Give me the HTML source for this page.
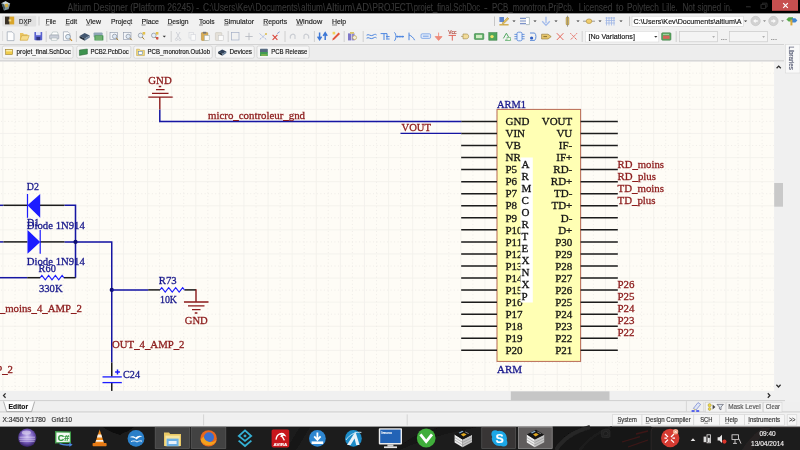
<!DOCTYPE html>
<html><head><meta charset="utf-8"><title>Altium Designer - projet_final.SchDoc</title>
<style>
html,body{margin:0;padding:0;background:#f0f0f0;}
body{width:800px;height:450px;overflow:hidden;}
svg{display:block;}
text{white-space:pre;}
</style></head><body>
<svg width="800" height="450" viewBox="0 0 800 450" font-family="'Liberation Sans', sans-serif">
<defs><filter id="soft" x="-5%" y="-5%" width="110%" height="110%"><feGaussianBlur stdDeviation="0.35"/></filter><linearGradient id="tb" x1="0" y1="0" x2="1" y2="0"><stop offset="0" stop-color="#222"/><stop offset="1" stop-color="#1a1414"/></linearGradient><radialGradient id="ecl" cx="0.5" cy="0.42" r="0.6"><stop offset="0" stop-color="#cbbdf0"/><stop offset="0.55" stop-color="#7a5fc0"/><stop offset="1" stop-color="#2a1858"/></radialGradient></defs>
<g id="sheet">
<rect x="0" y="61.7" width="774.2" height="329.2" fill="#fefcf6" />
<path d="M2.95 62V390.8 M27.05 62V390.8 M51.15 62V390.8 M75.25 62V390.8 M99.35 62V390.8 M123.45 62V390.8 M147.55 62V390.8 M171.65 62V390.8 M195.75 62V390.8 M219.85 62V390.8 M243.95 62V390.8 M268.05 62V390.8 M292.15 62V390.8 M316.25 62V390.8 M340.35 62V390.8 M364.45 62V390.8 M388.55 62V390.8 M412.65 62V390.8 M436.75 62V390.8 M460.85 62V390.8 M484.95 62V390.8 M509.05 62V390.8 M533.15 62V390.8 M557.25 62V390.8 M581.35 62V390.8 M605.45 62V390.8 M629.55 62V390.8 M653.65 62V390.8 M677.75 62V390.8 M701.85 62V390.8 M725.95 62V390.8 M750.05 62V390.8 M0 85.25H774 M0 109.35H774 M0 133.45H774 M0 157.55H774 M0 181.65H774 M0 205.75H774 M0 229.85H774 M0 253.95H774 M0 278.05H774 M0 302.15H774 M0 326.25H774 M0 350.35H774 M0 374.45H774" stroke="#f1f0eb" stroke-width="0.8" fill="none"/>
<path d="M15.0 62.5V390.8 M39.1 62.5V390.8 M63.2 62.5V390.8 M87.3 62.5V390.8 M111.4 62.5V390.8 M135.5 62.5V390.8 M159.6 62.5V390.8 M183.7 62.5V390.8 M207.8 62.5V390.8 M231.9 62.5V390.8 M256.0 62.5V390.8 M280.1 62.5V390.8 M304.2 62.5V390.8 M328.3 62.5V390.8 M352.4 62.5V390.8 M376.5 62.5V390.8 M400.6 62.5V390.8 M424.7 62.5V390.8 M448.8 62.5V390.8 M472.9 62.5V390.8 M497.0 62.5V390.8 M521.1 62.5V390.8 M545.2 62.5V390.8 M569.3 62.5V390.8 M593.4 62.5V390.8 M617.5 62.5V390.8 M641.6 62.5V390.8 M665.7 62.5V390.8 M689.8 62.5V390.8 M713.9 62.5V390.8 M738.0 62.5V390.8 M762.1 62.5V390.8 M1 73.2H774 M1 97.3H774 M1 121.4H774 M1 145.5H774 M1 169.6H774 M1 193.7H774 M1 217.8H774 M1 241.9H774 M1 266.0H774 M1 290.1H774 M1 314.2H774 M1 338.3H774 M1 362.4H774 M1 386.5H774" stroke="#ebe9e4" stroke-width="0.8" stroke-dasharray="1 2.51" fill="none"/>
</g>
<g id="schematic" font-family="'Liberation Serif', serif" filter="url(#soft)">
<rect x="497.0" y="109.4" width="83.60000000000002" height="252.0" fill="#ffffb4" stroke="#b86a55" stroke-width="1.0" />
<line x1="461.2" y1="121.4" x2="497.0" y2="121.4" stroke="#1a1a1a" stroke-width="1.5" />
<line x1="580.6" y1="121.4" x2="617.8" y2="121.4" stroke="#1a1a1a" stroke-width="1.5" />
<text x="505.5" y="125.1" font-size="11" fill="#141414" stroke="#141414" stroke-width="0.3">GND</text>
<text x="572.3" y="125.1" font-size="11" fill="#141414" text-anchor="end" stroke="#141414" stroke-width="0.3">VOUT</text>
<line x1="461.2" y1="133.45" x2="497.0" y2="133.45" stroke="#1a1a1a" stroke-width="1.5" />
<line x1="580.6" y1="133.45" x2="617.8" y2="133.45" stroke="#1a1a1a" stroke-width="1.5" />
<text x="505.5" y="137.15" font-size="11" fill="#141414" stroke="#141414" stroke-width="0.3">VIN</text>
<text x="572.3" y="137.15" font-size="11" fill="#141414" text-anchor="end" stroke="#141414" stroke-width="0.3">VU</text>
<line x1="461.2" y1="145.5" x2="497.0" y2="145.5" stroke="#1a1a1a" stroke-width="1.5" />
<line x1="580.6" y1="145.5" x2="617.8" y2="145.5" stroke="#1a1a1a" stroke-width="1.5" />
<text x="505.5" y="149.2" font-size="11" fill="#141414" stroke="#141414" stroke-width="0.3">VB</text>
<text x="572.3" y="149.2" font-size="11" fill="#141414" text-anchor="end" stroke="#141414" stroke-width="0.3">IF-</text>
<line x1="461.2" y1="157.55" x2="497.0" y2="157.55" stroke="#1a1a1a" stroke-width="1.5" />
<line x1="580.6" y1="157.55" x2="617.8" y2="157.55" stroke="#1a1a1a" stroke-width="1.5" />
<text x="505.5" y="161.25" font-size="11" fill="#141414" stroke="#141414" stroke-width="0.3">NR</text>
<text x="572.3" y="161.25" font-size="11" fill="#141414" text-anchor="end" stroke="#141414" stroke-width="0.3">IF+</text>
<line x1="461.2" y1="169.6" x2="497.0" y2="169.6" stroke="#1a1a1a" stroke-width="1.5" />
<line x1="580.6" y1="169.6" x2="617.8" y2="169.6" stroke="#1a1a1a" stroke-width="1.5" />
<text x="505.5" y="173.3" font-size="11" fill="#141414" stroke="#141414" stroke-width="0.3">P5</text>
<text x="572.3" y="173.3" font-size="11" fill="#141414" text-anchor="end" stroke="#141414" stroke-width="0.3">RD-</text>
<line x1="461.2" y1="181.65" x2="497.0" y2="181.65" stroke="#1a1a1a" stroke-width="1.5" />
<line x1="580.6" y1="181.65" x2="617.8" y2="181.65" stroke="#1a1a1a" stroke-width="1.5" />
<text x="505.5" y="185.35" font-size="11" fill="#141414" stroke="#141414" stroke-width="0.3">P6</text>
<text x="572.3" y="185.35" font-size="11" fill="#141414" text-anchor="end" stroke="#141414" stroke-width="0.3">RD+</text>
<line x1="461.2" y1="193.7" x2="497.0" y2="193.7" stroke="#1a1a1a" stroke-width="1.5" />
<line x1="580.6" y1="193.7" x2="617.8" y2="193.7" stroke="#1a1a1a" stroke-width="1.5" />
<text x="505.5" y="197.4" font-size="11" fill="#141414" stroke="#141414" stroke-width="0.3">P7</text>
<text x="572.3" y="197.4" font-size="11" fill="#141414" text-anchor="end" stroke="#141414" stroke-width="0.3">TD-</text>
<line x1="461.2" y1="205.75" x2="497.0" y2="205.75" stroke="#1a1a1a" stroke-width="1.5" />
<line x1="580.6" y1="205.75" x2="617.8" y2="205.75" stroke="#1a1a1a" stroke-width="1.5" />
<text x="505.5" y="209.45" font-size="11" fill="#141414" stroke="#141414" stroke-width="0.3">P8</text>
<text x="572.3" y="209.45" font-size="11" fill="#141414" text-anchor="end" stroke="#141414" stroke-width="0.3">TD+</text>
<line x1="461.2" y1="217.8" x2="497.0" y2="217.8" stroke="#1a1a1a" stroke-width="1.5" />
<line x1="580.6" y1="217.8" x2="617.8" y2="217.8" stroke="#1a1a1a" stroke-width="1.5" />
<text x="505.5" y="221.5" font-size="11" fill="#141414" stroke="#141414" stroke-width="0.3">P9</text>
<text x="572.3" y="221.5" font-size="11" fill="#141414" text-anchor="end" stroke="#141414" stroke-width="0.3">D-</text>
<line x1="461.2" y1="229.85" x2="497.0" y2="229.85" stroke="#1a1a1a" stroke-width="1.5" />
<line x1="580.6" y1="229.85" x2="617.8" y2="229.85" stroke="#1a1a1a" stroke-width="1.5" />
<text x="505.5" y="233.55" font-size="11" fill="#141414" stroke="#141414" stroke-width="0.3">P10</text>
<text x="572.3" y="233.55" font-size="11" fill="#141414" text-anchor="end" stroke="#141414" stroke-width="0.3">D+</text>
<line x1="461.2" y1="241.9" x2="497.0" y2="241.9" stroke="#1a1a1a" stroke-width="1.5" />
<line x1="580.6" y1="241.9" x2="617.8" y2="241.9" stroke="#1a1a1a" stroke-width="1.5" />
<text x="505.5" y="245.6" font-size="11" fill="#141414" stroke="#141414" stroke-width="0.3">P11</text>
<text x="572.3" y="245.6" font-size="11" fill="#141414" text-anchor="end" stroke="#141414" stroke-width="0.3">P30</text>
<line x1="461.2" y1="253.95" x2="497.0" y2="253.95" stroke="#1a1a1a" stroke-width="1.5" />
<line x1="580.6" y1="253.95" x2="617.8" y2="253.95" stroke="#1a1a1a" stroke-width="1.5" />
<text x="505.5" y="257.65" font-size="11" fill="#141414" stroke="#141414" stroke-width="0.3">P12</text>
<text x="572.3" y="257.65" font-size="11" fill="#141414" text-anchor="end" stroke="#141414" stroke-width="0.3">P29</text>
<line x1="461.2" y1="266.0" x2="497.0" y2="266.0" stroke="#1a1a1a" stroke-width="1.5" />
<line x1="580.6" y1="266.0" x2="617.8" y2="266.0" stroke="#1a1a1a" stroke-width="1.5" />
<text x="505.5" y="269.7" font-size="11" fill="#141414" stroke="#141414" stroke-width="0.3">P13</text>
<text x="572.3" y="269.7" font-size="11" fill="#141414" text-anchor="end" stroke="#141414" stroke-width="0.3">P28</text>
<line x1="461.2" y1="278.05" x2="497.0" y2="278.05" stroke="#1a1a1a" stroke-width="1.5" />
<line x1="580.6" y1="278.05" x2="617.8" y2="278.05" stroke="#1a1a1a" stroke-width="1.5" />
<text x="505.5" y="281.75" font-size="11" fill="#141414" stroke="#141414" stroke-width="0.3">P14</text>
<text x="572.3" y="281.75" font-size="11" fill="#141414" text-anchor="end" stroke="#141414" stroke-width="0.3">P27</text>
<line x1="461.2" y1="290.1" x2="497.0" y2="290.1" stroke="#1a1a1a" stroke-width="1.5" />
<line x1="580.6" y1="290.1" x2="617.8" y2="290.1" stroke="#1a1a1a" stroke-width="1.5" />
<text x="505.5" y="293.8" font-size="11" fill="#141414" stroke="#141414" stroke-width="0.3">P15</text>
<text x="572.3" y="293.8" font-size="11" fill="#141414" text-anchor="end" stroke="#141414" stroke-width="0.3">P26</text>
<line x1="461.2" y1="302.15" x2="497.0" y2="302.15" stroke="#1a1a1a" stroke-width="1.5" />
<line x1="580.6" y1="302.15" x2="617.8" y2="302.15" stroke="#1a1a1a" stroke-width="1.5" />
<text x="505.5" y="305.85" font-size="11" fill="#141414" stroke="#141414" stroke-width="0.3">P16</text>
<text x="572.3" y="305.85" font-size="11" fill="#141414" text-anchor="end" stroke="#141414" stroke-width="0.3">P25</text>
<line x1="461.2" y1="314.2" x2="497.0" y2="314.2" stroke="#1a1a1a" stroke-width="1.5" />
<line x1="580.6" y1="314.2" x2="617.8" y2="314.2" stroke="#1a1a1a" stroke-width="1.5" />
<text x="505.5" y="317.9" font-size="11" fill="#141414" stroke="#141414" stroke-width="0.3">P17</text>
<text x="572.3" y="317.9" font-size="11" fill="#141414" text-anchor="end" stroke="#141414" stroke-width="0.3">P24</text>
<line x1="461.2" y1="326.25" x2="497.0" y2="326.25" stroke="#1a1a1a" stroke-width="1.5" />
<line x1="580.6" y1="326.25" x2="617.8" y2="326.25" stroke="#1a1a1a" stroke-width="1.5" />
<text x="505.5" y="329.95" font-size="11" fill="#141414" stroke="#141414" stroke-width="0.3">P18</text>
<text x="572.3" y="329.95" font-size="11" fill="#141414" text-anchor="end" stroke="#141414" stroke-width="0.3">P23</text>
<line x1="461.2" y1="338.3" x2="497.0" y2="338.3" stroke="#1a1a1a" stroke-width="1.5" />
<line x1="580.6" y1="338.3" x2="617.8" y2="338.3" stroke="#1a1a1a" stroke-width="1.5" />
<text x="505.5" y="342.0" font-size="11" fill="#141414" stroke="#141414" stroke-width="0.3">P19</text>
<text x="572.3" y="342.0" font-size="11" fill="#141414" text-anchor="end" stroke="#141414" stroke-width="0.3">P22</text>
<line x1="461.2" y1="350.35" x2="497.0" y2="350.35" stroke="#1a1a1a" stroke-width="1.5" />
<line x1="580.6" y1="350.35" x2="617.8" y2="350.35" stroke="#1a1a1a" stroke-width="1.5" />
<text x="505.5" y="354.05" font-size="11" fill="#141414" stroke="#141414" stroke-width="0.3">P20</text>
<text x="572.3" y="354.05" font-size="11" fill="#141414" text-anchor="end" stroke="#141414" stroke-width="0.3">P21</text>
<rect x="520.5" y="157.5" width="12.3" height="145" fill="#ffffff" />
<text x="521.5" y="168.2" font-size="11" fill="#141414" stroke="#141414" stroke-width="0.3">A</text>
<text x="521.5" y="180.2" font-size="11" fill="#141414" stroke="#141414" stroke-width="0.3">R</text>
<text x="521.5" y="192.2" font-size="11" fill="#141414" stroke="#141414" stroke-width="0.3">M</text>
<text x="521.5" y="204.2" font-size="11" fill="#141414" stroke="#141414" stroke-width="0.3">C</text>
<text x="521.5" y="216.2" font-size="11" fill="#141414" stroke="#141414" stroke-width="0.3">O</text>
<text x="521.5" y="228.2" font-size="11" fill="#141414" stroke="#141414" stroke-width="0.3">R</text>
<text x="521.5" y="240.2" font-size="11" fill="#141414" stroke="#141414" stroke-width="0.3">T</text>
<text x="521.5" y="252.2" font-size="11" fill="#141414" stroke="#141414" stroke-width="0.3">E</text>
<text x="521.5" y="264.2" font-size="11" fill="#141414" stroke="#141414" stroke-width="0.3">X</text>
<text x="521.5" y="276.2" font-size="11" fill="#141414" stroke="#141414" stroke-width="0.3">N</text>
<text x="521.5" y="288.2" font-size="11" fill="#141414" stroke="#141414" stroke-width="0.3">X</text>
<text x="521.5" y="300.2" font-size="11" fill="#141414" stroke="#141414" stroke-width="0.3">P</text>
<text x="497" y="107.5" font-size="11" fill="#1a1a8c" textLength="29" lengthAdjust="spacingAndGlyphs" stroke="#1a1a8c" stroke-width="0.3">ARM1</text>
<text x="497" y="372.5" font-size="11" fill="#1a1a8c" textLength="25" lengthAdjust="spacingAndGlyphs" stroke="#1a1a8c" stroke-width="0.3">ARM</text>
<text x="617.5" y="167.6" font-size="11" fill="#8c1c1c" textLength="46.5" lengthAdjust="spacingAndGlyphs" stroke="#8c1c1c" stroke-width="0.3">RD_moins</text>
<text x="617.5" y="179.65" font-size="11" fill="#8c1c1c" textLength="38.5" lengthAdjust="spacingAndGlyphs" stroke="#8c1c1c" stroke-width="0.3">RD_plus</text>
<text x="617.5" y="191.7" font-size="11" fill="#8c1c1c" textLength="46.5" lengthAdjust="spacingAndGlyphs" stroke="#8c1c1c" stroke-width="0.3">TD_moins</text>
<text x="617.5" y="203.75" font-size="11" fill="#8c1c1c" textLength="38" lengthAdjust="spacingAndGlyphs" stroke="#8c1c1c" stroke-width="0.3">TD_plus</text>
<text x="617.5" y="288.1" font-size="11" fill="#8c1c1c" textLength="17" lengthAdjust="spacingAndGlyphs" stroke="#8c1c1c" stroke-width="0.3">P26</text>
<text x="617.5" y="300.15" font-size="11" fill="#8c1c1c" textLength="17" lengthAdjust="spacingAndGlyphs" stroke="#8c1c1c" stroke-width="0.3">P25</text>
<text x="617.5" y="312.2" font-size="11" fill="#8c1c1c" textLength="17" lengthAdjust="spacingAndGlyphs" stroke="#8c1c1c" stroke-width="0.3">P24</text>
<text x="617.5" y="324.25" font-size="11" fill="#8c1c1c" textLength="17" lengthAdjust="spacingAndGlyphs" stroke="#8c1c1c" stroke-width="0.3">P23</text>
<text x="617.5" y="336.3" font-size="11" fill="#8c1c1c" textLength="17" lengthAdjust="spacingAndGlyphs" stroke="#8c1c1c" stroke-width="0.3">P22</text>
<path d="M159.8 109.5V121.4H461.2" stroke="#1616a2" stroke-width="1.5" fill="none"/>
<line x1="400.5" y1="133.45" x2="461.2" y2="133.45" stroke="#1616a2" stroke-width="1.3" />
<text x="401.5" y="131.3" font-size="11" fill="#8c1c1c" textLength="29.5" lengthAdjust="spacingAndGlyphs" stroke="#8c1c1c" stroke-width="0.3">VOUT</text>
<text x="208" y="119.0" font-size="11" fill="#8c1c1c" textLength="97" lengthAdjust="spacingAndGlyphs" stroke="#8c1c1c" stroke-width="0.3">micro_controleur_gnd</text>
<path d="M159.8 109.5V97.1 M148.3 97.1H172.7 M152 93.4H168.5 M156 89.6H164.6 M158.8 86.5H161.2" stroke="#8c1c1c" stroke-width="1.4" fill="none"/>
<text x="148.3" y="83.8" font-size="11" fill="#8c1c1c" textLength="23.4" lengthAdjust="spacingAndGlyphs" stroke="#8c1c1c" stroke-width="0.3">GND</text>
<line x1="0" y1="205.3" x2="3.4" y2="205.3" stroke="#1616a2" stroke-width="1.5" />
<line x1="3.4" y1="205.3" x2="27.5" y2="205.3" stroke="#1a1a1a" stroke-width="1.5" />
<line x1="40" y1="205.3" x2="64.6" y2="205.3" stroke="#1a1a1a" stroke-width="1.5" />
<path d="M64.6 205.3H75.5V277.7" stroke="#1616a2" stroke-width="1.5" fill="none"/>
<path d="M27.5 205.3L40.2 194V217.8Z" fill="#1a1aff"/>
<line x1="27.5" y1="194" x2="27.5" y2="217.8" stroke="#1a1aff" stroke-width="1.2" />
<line x1="0" y1="241.9" x2="3.4" y2="241.9" stroke="#1616a2" stroke-width="1.5" />
<line x1="3.4" y1="241.9" x2="27.5" y2="241.9" stroke="#1a1a1a" stroke-width="1.5" />
<line x1="40" y1="241.9" x2="64.6" y2="241.9" stroke="#1a1a1a" stroke-width="1.5" />
<path d="M64.6 241.9H111.75V362.5" stroke="#1616a2" stroke-width="1.5" fill="none"/>
<path d="M40.2 241.9L27.5 230V253.8Z" fill="#1a1aff"/>
<line x1="40.2" y1="230" x2="40.2" y2="253.8" stroke="#1a1aff" stroke-width="1.2" />
<circle cx="75.5" cy="241.9" r="2.1" fill="#101070"/>
<text x="26.8" y="190.1" font-size="11" fill="#1a1a8c" textLength="12.2" lengthAdjust="spacingAndGlyphs" stroke="#1a1a8c" stroke-width="0.3">D2</text>
<text x="27" y="226.4" font-size="11" fill="#1a1a8c" textLength="12.2" lengthAdjust="spacingAndGlyphs" stroke="#1a1a8c" stroke-width="0.3">D1</text>
<text x="26.8" y="228.5" font-size="11" fill="#1a1a8c" textLength="58" lengthAdjust="spacingAndGlyphs" stroke="#1a1a8c" stroke-width="0.3">Diode 1N914</text>
<text x="26.8" y="264.8" font-size="11" fill="#1a1a8c" textLength="58" lengthAdjust="spacingAndGlyphs" stroke="#1a1a8c" stroke-width="0.3">Diode 1N914</text>
<line x1="0" y1="277.7" x2="27.2" y2="277.7" stroke="#1616a2" stroke-width="1.5" />
<line x1="27.2" y1="277.7" x2="40.2" y2="277.7" stroke="#1a1a1a" stroke-width="1.5" />
<line x1="63.8" y1="277.7" x2="75.5" y2="277.7" stroke="#1a1a1a" stroke-width="1.5" />
<path d="M40.2 277.7 L41.89 275.5 L45.26 279.9 L48.63 275.5 L52.0 279.9 L55.37 275.5 L58.74 279.9 L62.11 275.5 L63.8 277.7" stroke="#1a1aff" stroke-width="1.1" fill="none"/>
<text x="38.6" y="272.1" font-size="11" fill="#1a1a8c" textLength="17.2" lengthAdjust="spacingAndGlyphs" stroke="#1a1a8c" stroke-width="0.3">R60</text>
<text x="38.9" y="291.8" font-size="11" fill="#1a1a8c" textLength="23.7" lengthAdjust="spacingAndGlyphs" stroke="#1a1a8c" stroke-width="0.3">330K</text>
<text x="-0.2" y="312" font-size="11" fill="#8c1c1c" textLength="82.1" lengthAdjust="spacingAndGlyphs" stroke="#8c1c1c" stroke-width="0.3">_moins_4_AMP_2</text>
<text x="-13.4" y="372.5" font-size="11" fill="#8c1c1c" textLength="26.4" lengthAdjust="spacingAndGlyphs" stroke="#8c1c1c" stroke-width="0.3">MP_2</text>
<circle cx="111.75" cy="289.9" r="2.1" fill="#101070"/>
<line x1="111.75" y1="289.9" x2="148.2" y2="289.9" stroke="#1616a2" stroke-width="1.5" />
<line x1="148.2" y1="289.9" x2="160" y2="289.9" stroke="#1a1a1a" stroke-width="1.5" />
<line x1="184.4" y1="289.9" x2="196" y2="289.9" stroke="#1a1a1a" stroke-width="1.5" />
<path d="M160 289.9 L161.74 287.7 L165.23 292.1 L168.71 287.7 L172.2 292.1 L175.69 287.7 L179.17 292.1 L182.66 287.7 L184.4 289.9" stroke="#1a1aff" stroke-width="1.1" fill="none"/>
<path d="M196 289.29999999999995V302 M184 302H208.5 M188 305.9H204.5 M192 309.6H200.5 M194.8 313H197.4" stroke="#8c1c1c" stroke-width="1.4" fill="none"/>
<text x="158.8" y="284.1" font-size="11" fill="#1a1a8c" textLength="17.8" lengthAdjust="spacingAndGlyphs" stroke="#1a1a8c" stroke-width="0.3">R73</text>
<text x="160" y="303.3" font-size="11" fill="#1a1a8c" textLength="17" lengthAdjust="spacingAndGlyphs" stroke="#1a1a8c" stroke-width="0.3">10K</text>
<text x="184.8" y="323.8" font-size="11" fill="#8c1c1c" textLength="23" lengthAdjust="spacingAndGlyphs" stroke="#8c1c1c" stroke-width="0.3">GND</text>
<text x="112" y="348.3" font-size="11" fill="#8c1c1c" textLength="72.5" lengthAdjust="spacingAndGlyphs" stroke="#8c1c1c" stroke-width="0.3">OUT_4_AMP_2</text>
<line x1="111.75" y1="362.5" x2="111.75" y2="376.6" stroke="#1a1a1a" stroke-width="1.5" />
<line x1="111.75" y1="382.6" x2="111.75" y2="391.5" stroke="#1a1a1a" stroke-width="1.5" />
<line x1="102.5" y1="376.9" x2="121.8" y2="376.9" stroke="#1a1aff" stroke-width="1.3" />
<line x1="102.5" y1="382.6" x2="121.8" y2="382.6" stroke="#1a1aff" stroke-width="1.3" />
<path d="M115.1 372H119.9 M117.5 369.6V374.4" stroke="#1a1aff" stroke-width="1.4" fill="none"/>
<text x="123" y="378" font-size="11" fill="#1a1a8c" textLength="17" lengthAdjust="spacingAndGlyphs" stroke="#1a1a8c" stroke-width="0.3">C24</text>
</g>
<g id="scrollbars">
<rect x="774.2" y="61.7" width="25.8" height="340" fill="#f0f0f0" />
<rect x="774.2" y="183" width="8.8" height="23.7" fill="#c9c9c9" />
<rect x="0" y="390.9" width="785" height="9.6" fill="#f0f0f0" />
<rect x="510.8" y="391.4" width="98.7" height="9" fill="#c6c6c6" />
<path d="M776.6 68.3L778.7 66.1L780.8 68.3 M776.4 384.8L778.5 387L780.6 384.8 M5.6 393.4L3.5 395.6L5.6 397.8 M767.8 393.3L769.9 395.5L767.8 397.7" stroke="#2e2e2e" stroke-width="1.25" fill="none"/>
</g>
<g id="chrome-top" filter="url(#soft)">
<rect x="0" y="0" width="800" height="13.6" fill="#000" />
<rect x="0" y="13.6" width="800" height="1.2" fill="#fafafa" />
<rect x="0" y="14.8" width="800" height="14.6" fill="#f1f1f1" />
<rect x="0" y="29.4" width="800" height="15" fill="#f1f1f1" />
<rect x="0" y="44" width="784" height="0.9" fill="#c9c9c9" />
<rect x="0" y="44.9" width="784" height="0.8" fill="#fbfbfb" />
<rect x="0" y="45.2" width="800" height="15.2" fill="#ededed" />
<rect x="0" y="60.4" width="784" height="0.9" fill="#c9c9c9" />
<text x="67.5" y="10.7" font-size="11.8" fill="#373737" textLength="131.5" lengthAdjust="spacingAndGlyphs" stroke="#373737" stroke-width="0.15">Altium Designer (Platform 26245) -</text>
<text x="203" y="10.7" font-size="11.8" fill="#373737" textLength="51.5" lengthAdjust="spacingAndGlyphs" stroke="#373737" stroke-width="0.15">C:\Users\Kev\</text>
<text x="255.5" y="10.7" font-size="11.8" fill="#373737" textLength="44.5" lengthAdjust="spacingAndGlyphs" stroke="#373737" stroke-width="0.15">Documents\</text>
<text x="301" y="10.7" font-size="11.8" fill="#373737" textLength="24.2" lengthAdjust="spacingAndGlyphs" stroke="#373737" stroke-width="0.15">altium\</text>
<text x="326" y="10.7" font-size="11.8" fill="#373737" textLength="29" lengthAdjust="spacingAndGlyphs" stroke="#373737" stroke-width="0.15">Altium\</text>
<text x="356" y="10.7" font-size="11.8" fill="#373737" textLength="15.8" lengthAdjust="spacingAndGlyphs" stroke="#373737" stroke-width="0.15">AD\</text>
<text x="372.5" y="10.7" font-size="11.8" fill="#373737" textLength="40.6" lengthAdjust="spacingAndGlyphs" stroke="#373737" stroke-width="0.15">PROJECT\</text>
<text x="413.75" y="10.7" font-size="11.8" fill="#373737" textLength="66.3" lengthAdjust="spacingAndGlyphs" stroke="#373737" stroke-width="0.15">projet_final.SchDoc</text>
<text x="484" y="10.7" font-size="11.8" fill="#373737" textLength="3.6" lengthAdjust="spacingAndGlyphs" stroke="#373737" stroke-width="0.15">-</text>
<text x="492" y="10.7" font-size="11.8" fill="#373737" textLength="81.8" lengthAdjust="spacingAndGlyphs" stroke="#373737" stroke-width="0.15">PCB_monotron.PrjPcb.</text>
<text x="578.75" y="10.7" font-size="11.8" fill="#373737" textLength="33.6" lengthAdjust="spacingAndGlyphs" stroke="#373737" stroke-width="0.15">Licensed</text>
<text x="616" y="10.7" font-size="11.8" fill="#373737" textLength="7.6" lengthAdjust="spacingAndGlyphs" stroke="#373737" stroke-width="0.15">to</text>
<text x="627" y="10.7" font-size="11.8" fill="#373737" textLength="31.8" lengthAdjust="spacingAndGlyphs" stroke="#373737" stroke-width="0.15">Polytech</text>
<text x="662" y="10.7" font-size="11.8" fill="#373737" textLength="15.5" lengthAdjust="spacingAndGlyphs" stroke="#373737" stroke-width="0.15">Lille.</text>
<text x="682.5" y="10.7" font-size="11.8" fill="#373737" textLength="12.6" lengthAdjust="spacingAndGlyphs" stroke="#373737" stroke-width="0.15">Not</text>
<text x="697.5" y="10.7" font-size="11.8" fill="#373737" textLength="23.6" lengthAdjust="spacingAndGlyphs" stroke="#373737" stroke-width="0.15">signed</text>
<text x="724" y="10.7" font-size="11.8" fill="#373737" textLength="8" lengthAdjust="spacingAndGlyphs" stroke="#373737" stroke-width="0.15">in.</text>
<path d="M1.5 3.2L5.6 1.2L10.2 3.8L8.6 9.2L4 10.6Z" fill="#7f979f"/><path d="M1.5 3.2L5.6 1.2L10.2 3.8L6.2 5.2Z" fill="#c9d6da"/><path d="M4.6 4.2L7.6 3.6L8.4 6.4L5.6 7.4Z" fill="#d2ad3c"/><path d="M1.5 3.2L4 10.6L5 7.8L3.6 4Z" fill="#3f565e"/>
<line x1="746" y1="6.8" x2="750.6" y2="6.8" stroke="#2e2e2e" stroke-width="1.1" />
<path d="M761 4.6H765.6V8.4H761Z M762.4 4.6V3.2H767V7H765.6" stroke="#2c2c2c" stroke-width="0.9" fill="none"/>
<rect x="772" y="0" width="26" height="10.8" fill="#c75050" />
<path d="M783.2 3.2L787.8 7.8 M787.8 3.2L783.2 7.8" stroke="#fff" stroke-width="1.2" fill="none"/>
<rect x="785.6" y="44.4" width="14.4" height="28.6" fill="#f9f9f9" stroke="#d9d9d9" stroke-width="0.6" />
<text x="0" y="0" font-size="6.6" fill="#5b6078" textLength="23.7" lengthAdjust="spacingAndGlyphs" transform="translate(789.2 46.2) rotate(90)" stroke="#5b6078" stroke-width="0.15">Libraries</text>
<rect x="2.2" y="15.8" width="34" height="10.6" fill="#e2e2e2" rx="1" />
<rect x="5" y="16.6" width="4.6" height="7.8" fill="#3a3328" />
<rect x="9.6" y="16.6" width="4.6" height="7.8" fill="#d9a52b" />
<rect x="8.6" y="19.4" width="2.6" height="2" fill="#f1d98a" />
<text x="19" y="23.7" font-size="7.6" fill="#1c1c1c" textLength="12.5" lengthAdjust="spacingAndGlyphs" stroke="#1c1c1c" stroke-width="0.15">DXP</text>
<text x="45.7" y="23.7" font-size="7.6" fill="#1c1c1c" textLength="10.4" lengthAdjust="spacingAndGlyphs" stroke="#1c1c1c" stroke-width="0.15">File</text>
<text x="65.5" y="23.7" font-size="7.6" fill="#1c1c1c" textLength="11.5" lengthAdjust="spacingAndGlyphs" stroke="#1c1c1c" stroke-width="0.15">Edit</text>
<text x="86" y="23.7" font-size="7.6" fill="#1c1c1c" textLength="15" lengthAdjust="spacingAndGlyphs" stroke="#1c1c1c" stroke-width="0.15">View</text>
<text x="111" y="23.7" font-size="7.6" fill="#1c1c1c" textLength="21.2" lengthAdjust="spacingAndGlyphs" stroke="#1c1c1c" stroke-width="0.15">Project</text>
<text x="141.5" y="23.7" font-size="7.6" fill="#1c1c1c" textLength="17.5" lengthAdjust="spacingAndGlyphs" stroke="#1c1c1c" stroke-width="0.15">Place</text>
<text x="167.5" y="23.7" font-size="7.6" fill="#1c1c1c" textLength="21" lengthAdjust="spacingAndGlyphs" stroke="#1c1c1c" stroke-width="0.15">Design</text>
<text x="199" y="23.7" font-size="7.6" fill="#1c1c1c" textLength="15.5" lengthAdjust="spacingAndGlyphs" stroke="#1c1c1c" stroke-width="0.15">Tools</text>
<text x="224" y="23.7" font-size="7.6" fill="#1c1c1c" textLength="30" lengthAdjust="spacingAndGlyphs" stroke="#1c1c1c" stroke-width="0.15">Simulator</text>
<text x="263.2" y="23.7" font-size="7.6" fill="#1c1c1c" textLength="24" lengthAdjust="spacingAndGlyphs" stroke="#1c1c1c" stroke-width="0.15">Reports</text>
<text x="296.2" y="23.7" font-size="7.6" fill="#1c1c1c" textLength="26" lengthAdjust="spacingAndGlyphs" stroke="#1c1c1c" stroke-width="0.15">Window</text>
<text x="332" y="23.7" font-size="7.6" fill="#1c1c1c" textLength="14.2" lengthAdjust="spacingAndGlyphs" stroke="#1c1c1c" stroke-width="0.15">Help</text>
<line x1="24.5" y1="25.0" x2="27.5" y2="25.0" stroke="#333" stroke-width="0.6" />
<line x1="45.7" y1="25.0" x2="49.4" y2="25.0" stroke="#333" stroke-width="0.6" />
<line x1="65.5" y1="25.0" x2="69.6" y2="25.0" stroke="#333" stroke-width="0.6" />
<line x1="86" y1="25.0" x2="90.4" y2="25.0" stroke="#333" stroke-width="0.6" />
<line x1="129" y1="25.0" x2="130.6" y2="25.0" stroke="#333" stroke-width="0.6" />
<line x1="141.5" y1="25.0" x2="145.6" y2="25.0" stroke="#333" stroke-width="0.6" />
<line x1="167.5" y1="25.0" x2="172.6" y2="25.0" stroke="#333" stroke-width="0.6" />
<line x1="199" y1="25.0" x2="203" y2="25.0" stroke="#333" stroke-width="0.6" />
<line x1="224" y1="25.0" x2="228.6" y2="25.0" stroke="#333" stroke-width="0.6" />
<line x1="263.2" y1="25.0" x2="268.2" y2="25.0" stroke="#333" stroke-width="0.6" />
<line x1="296.2" y1="25.0" x2="302.8" y2="25.0" stroke="#333" stroke-width="0.6" />
<line x1="332" y1="25.0" x2="337" y2="25.0" stroke="#333" stroke-width="0.6" />
<line x1="39" y1="16.5" x2="39" y2="25.5" stroke="#c4c4c4" stroke-width="0.8" />
<line x1="494.5" y1="16.5" x2="494.5" y2="26" stroke="#bdbdbd" stroke-width="0.8" />
<rect x="499.4" y="17" width="4.6" height="5" fill="#5f86cf"/><path d="M499.4 24.8H508.6" stroke="#cfa53a" stroke-width="1.3"/><path d="M502 23.2L507.4 17.4L508.8 18.8L503.4 24Z" fill="#e8c45a" stroke="#8a6b22" stroke-width="0.4"/>
<path d="M512.4 20.4H515.6L514 22.099999999999998Z" fill="#333"/>
<path d="M520 18.4H527.5 M520 21H529 M520 23.6H527.5" stroke="#7d94c9" stroke-width="1.2"/><path d="M526 17.4H529.4V24.6H526" stroke="#9aa" stroke-width="0.7" fill="#fff"/>
<path d="M533.4 20.4H536.6L535 22.099999999999998Z" fill="#333"/>
<path d="M546 16.8V23 M542.2 21.2L546 25.2L549.8 21.2" stroke="#a3bbeb" stroke-width="1.3" fill="none"/>
<path d="M554.4 20.4H557.6L556 22.099999999999998Z" fill="#333"/>
<rect x="566.2" y="17" width="2.6" height="8" rx="1" fill="#e8c765" stroke="#9b7a2b" stroke-width="0.6"/><path d="M567.5 15.6V26.8" stroke="#777" stroke-width="0.6"/>
<path d="M576.4 20.4H579.6L578 22.099999999999998Z" fill="#333"/>
<path d="M583 21.2H595" stroke="#777" stroke-width="0.7"/><ellipse cx="589" cy="21.2" rx="2.8" ry="2.3" fill="#f2cf6e" stroke="#a88a3a" stroke-width="0.6"/>
<path d="M598.4 20.4H601.6L600 22.099999999999998Z" fill="#333"/>
<path d="M606.5 17V25.5 M609 17V25.5 M611.5 17V25.5 M614 17V25.5 M605.5 18H615 M605.5 20.5H615 M605.5 23H615" stroke="#9fb6e6" stroke-width="0.8"/>
<path d="M619.4 20.4H622.6L621 22.099999999999998Z" fill="#333"/>
<line x1="629.5" y1="16.5" x2="629.5" y2="26" stroke="#bdbdbd" stroke-width="0.8" />
<rect x="632" y="16.2" width="111.4" height="10.2" fill="#fff" stroke="#d6d6d6" stroke-width="0.6" />
<text x="633.6" y="23.8" font-size="7.4" fill="#151515" textLength="108" lengthAdjust="spacingAndGlyphs" stroke="#151515" stroke-width="0.15">C:\Users\Kev\Documents\altium\A</text>
<path d="M744.0 20.4H747.2L745.6 22.099999999999998Z" fill="#333"/>
<circle cx="755.6" cy="21" r="4.7" fill="#d2d2d2" stroke="#c2c2c2" stroke-width="0.6"/><path d="M753.2 21L755.6 18.8V20.2H757.8000000000001V21.8H755.6V23.2Z" fill="#fafafa"/>
<circle cx="773.4" cy="21" r="4.7" fill="#d2d2d2" stroke="#c2c2c2" stroke-width="0.6"/><path d="M775.8 21L773.4 18.8V20.2H771.1999999999999V21.8H773.4V23.2Z" fill="#fafafa"/>
<path d="M763 20.2H766L764.5 22Z M781 20.2H784L782.5 22Z" fill="#8d8d8d"/>
<path d="M786.4 19.4L788.6 17.2H793V21.4H788.6Z" fill="#55a846"/><path d="M797.4 20.4L795.4 18.2H791.6V22.4H795.4Z" fill="#3f86d2"/><rect x="790.4" y="19.6" width="2" height="5.8" fill="#d9a93c"/>
<path d="M2.6 31.5V41.5" stroke="#c9c9c9" stroke-width="1" stroke-dasharray="1 1"/>
<path d="M7.2 31.8H12L14 33.8V40.6H7.2Z" fill="#fdfdfd" stroke="#9aa3b2" stroke-width="0.7"/>
<path d="M20 40.2V33H23L24 34.2H27.5V40.2Z" fill="#e9c462"/><path d="M20 40.2L21.8 35.6H29.2L27.5 40.2Z" fill="#f6dc8c" stroke="#c59b33" stroke-width="0.5"/>
<rect x="34.4" y="32" width="7.8" height="8.2" rx="0.6" fill="#5a62cf"/><rect x="36" y="32" width="4.6" height="3.2" fill="#dfe3fb"/><rect x="36.4" y="37" width="3.8" height="3.2" fill="#2f347f"/>
<line x1="46.2" y1="31" x2="46.2" y2="42" stroke="#c6c6c6" stroke-width="0.8" />
<path d="M51 35L52.6 32H57.4L58.4 35Z" fill="#fff" stroke="#9aa" stroke-width="0.5"/><rect x="49.6" y="35" width="9.2" height="4" rx="0.8" fill="#c9ced8" stroke="#8d94a3" stroke-width="0.5"/><rect x="51.4" y="38" width="5.6" height="2.4" fill="#f5f5f5" stroke="#9aa" stroke-width="0.4"/>
<path d="M63.4 31.8H68L69.8 33.6V40.4H63.4Z" fill="#fdfdfd" stroke="#9aa3b2" stroke-width="0.7"/><circle cx="68" cy="36.8" r="2.4" fill="#dcebf7" stroke="#7c8796" stroke-width="0.7"/><path d="M69.8 38.6L72 40.8" stroke="#c98a2b" stroke-width="1.2"/>
<line x1="76.4" y1="31" x2="76.4" y2="42" stroke="#c6c6c6" stroke-width="0.8" />
<path d="M79.6 36L84.6 33L89.8 35.4L84.8 38.6Z" fill="#42566f"/><path d="M79.6 36V38L84.8 40.8V38.6Z" fill="#26323f"/><path d="M89.8 35.4V37.4L84.8 40.8V38.6Z" fill="#6c829b"/>
<rect x="93.6" y="32.4" width="9" height="5" rx="0.8" fill="#8fa5b6"/><rect x="94.4" y="35.2" width="9" height="5.4" rx="0.6" fill="#4d9a58"/><path d="M95.5 37H102 M95.5 39H102" stroke="#bfe3a8" stroke-width="0.6"/>
<line x1="106.8" y1="31" x2="106.8" y2="42" stroke="#c6c6c6" stroke-width="0.8" />
<rect x="110" y="32.4" width="7.4" height="7" fill="#f4f6fa" stroke="#8c96a8" stroke-width="0.6"/><circle cx="114.6" cy="36.4" r="2.2" fill="#dfe9f5" stroke="#76808f" stroke-width="0.6"/><path d="M116.2 38L118.2 40.2" stroke="#a88436" stroke-width="1"/>
<rect x="123.6" y="32.4" width="7.4" height="7" fill="#f4f6fa" stroke="#8c96a8" stroke-width="0.6"/><circle cx="128.2" cy="36.4" r="2.2" fill="#dfe9f5" stroke="#76808f" stroke-width="0.6"/><path d="M129.79999999999998 38L131.79999999999998 40.2" stroke="#a88436" stroke-width="1"/>
<circle cx="140.6" cy="35.4" r="2.3" fill="#e6eef7" stroke="#76808f" stroke-width="0.6"/><path d="M142.2 37L144.2 39.4" stroke="#a88436" stroke-width="1"/><rect x="142.6" y="32" width="2.6" height="2.6" fill="#e3c14d"/>
<circle cx="153.8" cy="35.4" r="2.3" fill="#e6eef7" stroke="#76808f" stroke-width="0.6"/><path d="M155.4 37L157.4 39.4" stroke="#a88436" stroke-width="1"/><rect x="155.8" y="32" width="2.6" height="2.6" fill="#e3c14d"/>
<rect x="156" y="37" width="2.4" height="2.4" fill="#d0524a"/>
<path d="M162.70000000000002 35.800000000000004H165.9L164.3 37.5Z" fill="#333"/>
<line x1="171.2" y1="31" x2="171.2" y2="42" stroke="#c6c6c6" stroke-width="0.8" />
<path d="M176.2 32L179.8 38.4 M180 32L176.4 38.4" stroke="#c9ccd3" stroke-width="0.8"/><circle cx="176.4" cy="39.4" r="1.1" fill="none" stroke="#c9ccd3" stroke-width="0.7"/><circle cx="179.8" cy="39.4" r="1.1" fill="none" stroke="#c9ccd3" stroke-width="0.7"/>
<rect x="189" y="32.4" width="4.6" height="5.6" fill="#f4f4f4" stroke="#d2d5db" stroke-width="0.6"/><rect x="191" y="34.6" width="4.6" height="5.6" fill="#fafafa" stroke="#d2d5db" stroke-width="0.6"/>
<rect x="201.4" y="32.6" width="6.4" height="7.8" rx="0.6" fill="#d9ad55" stroke="#a98237" stroke-width="0.5"/><rect x="203" y="31.8" width="3.2" height="1.8" fill="#777"/><rect x="204.4" y="35.4" width="4.8" height="5.2" fill="#fbfbfb" stroke="#9aa" stroke-width="0.5"/>
<rect x="215.4" y="32.6" width="6.4" height="7.8" rx="0.6" fill="#e4e0d8" stroke="#c4c0b8" stroke-width="0.5"/><rect x="218.4" y="35.4" width="4.8" height="5.2" fill="#fbfbfb" stroke="#c4c4c4" stroke-width="0.5"/>
<line x1="228.2" y1="31" x2="228.2" y2="42" stroke="#c6c6c6" stroke-width="0.8" />
<rect x="231.4" y="32.6" width="7.6" height="7.4" fill="none" stroke="#a4aec6" stroke-width="0.7"/>
<path d="M249 32.8V40.2 M245.3 36.5H252.7" stroke="#b2b6be" stroke-width="0.8"/>
<path d="M259.6 33.6L266.4 39.6 M266.4 33.6L259.6 39.6" stroke="#9db0d8" stroke-width="0.9" stroke-dasharray="1.6 0.8"/><circle cx="266" cy="34" r="1" fill="#e3c14d"/>
<path d="M272.6 34.8L277.4 39.8 M277.4 34.8L272.6 39.8" stroke="#d8473c" stroke-width="1.1"/><path d="M277.2 33.6L279.6 31.8" stroke="#7d8fc2" stroke-width="0.9"/>
<line x1="285" y1="31" x2="285" y2="42" stroke="#c6c6c6" stroke-width="0.8" />
<path d="M290.4 38.6C289.4 34.2 293.6 33 295 35.6V39" stroke="#c9ccd2" stroke-width="1.1" fill="none"/>
<path d="M308.6 38.6C309.6 34.2 305.4 33 304 35.6V39" stroke="#c9ccd2" stroke-width="1.1" fill="none"/>
<line x1="314.4" y1="31" x2="314.4" y2="42" stroke="#c6c6c6" stroke-width="0.8" />
<path d="M319.6 32.4V38.4 M317.6 36.6L319.6 39.6L321.6 36.6" stroke="#3e78d6" stroke-width="1.5" fill="none"/><path d="M325.2 40V34 M323.2 35.8L325.2 32.6L327.2 35.8" stroke="#3e78d6" stroke-width="1.5" fill="none"/>
<path d="M332.2 40.4L333 38.2L338.6 32.6L340 34L334.4 39.6Z" fill="#e3553a"/><rect x="332.6" y="31.8" width="2.6" height="2.6" fill="#f0d55c"/>
<line x1="344.2" y1="31" x2="344.2" y2="42" stroke="#c6c6c6" stroke-width="0.8" />
<rect x="348" y="33.4" width="3" height="7" fill="#7f78c8"/><rect x="351.6" y="33.4" width="3" height="7" fill="#8f88d4"/><circle cx="354.6" cy="37.6" r="2" fill="#f3efe0" stroke="#b59a3c" stroke-width="0.6"/><rect x="350" y="32" width="4" height="1.8" fill="#d9c36a"/>
<line x1="363.2" y1="31" x2="363.2" y2="42" stroke="#c6c6c6" stroke-width="0.8" />
<path d="M366.6 35.2C368.6 33.4 370.6 36.8 373 35.2S376 34.6 376.6 35 M366.6 38.2C368.6 36.4 370.6 39.8 373 38.2S376 37.6 376.6 38" stroke="#4d86e0" stroke-width="1" fill="none"/>
<path d="M380.6 33.6H387V38.6 M384 33.6V40 M386 36.6H389.6 M386 39H389.6" stroke="#4d86e0" stroke-width="1" fill="none"/>
<path d="M394.4 32.4C396.4 34 396.4 39 394.4 40.8 M396 36.6H404" stroke="#4d86e0" stroke-width="1" fill="none" stroke-dasharray="none"/><path d="M397 36.6H404" stroke="#4d86e0" stroke-width="1.6" stroke-dasharray="1 0.7"/>
<path d="M409 32.6V40.2 M409 35C411.4 35.6 413.6 38 414.6 40.2" stroke="#4d86e0" stroke-width="1" fill="none"/>
<rect x="421" y="33.8" width="9.6" height="4.6" rx="1.2" fill="#dfe8f8" stroke="#4d86e0" stroke-width="0.6"/><path d="M423 36.2H428.6" stroke="#4d86e0" stroke-width="0.7"/>
<path d="M438.6 32.6V38 M435.2 36.6L438.6 40.4L442 36.6Z" fill="#ee8a7a" stroke="#ee8a7a" stroke-width="0.9"/>
<path d="M448.6 35.4H456 M452.3 35.4V40.6" stroke="#e0574a" stroke-width="0.9"/>
<text x="448.2" y="34.4" font-size="4.6" fill="#b1453a" textLength="8.2" lengthAdjust="spacingAndGlyphs" stroke="#b1453a" stroke-width="0.15">Vcc</text>
<path d="M461 36.4H463 M463 34H466.4C469.4 34 469.4 38.8 466.4 38.8H463Z" fill="#f2dc9a" stroke="#9c8440" stroke-width="0.6"/>
<rect x="474.4" y="33.6" width="9.4" height="5.8" rx="0.6" fill="#5aab64" stroke="#2f7a3c" stroke-width="0.5"/><rect x="476" y="34.8" width="6.2" height="3.4" fill="#d2ecc4"/>
<rect x="488.8" y="32.6" width="8.2" height="7.6" fill="#4fa55a" stroke="#2f7a3c" stroke-width="0.5"/><circle cx="492" cy="36.6" r="1.7" fill="#f1e36a"/>
<path d="M503.4 38.4L506.4 33.2L509.2 38.2 M505 40.2H510.6L509 37.4" stroke="#53a862" stroke-width="1" fill="none"/><rect x="507" y="37.4" width="3.4" height="3" fill="#e9f5e4" stroke="#53a862" stroke-width="0.5"/>
<rect x="517" y="32.2" width="5" height="8.6" rx="1.4" fill="#eaf1fd" stroke="#4f82d6" stroke-width="0.8"/><path d="M514.4 34.4H517 M514.4 36.6H517 M514.4 38.8H517 M522 34.4H524.6 M522 36.6H524.6 M522 38.8H524.6" stroke="#4f82d6" stroke-width="0.8"/>
<path d="M530 33H534.6C536.4 34.4 536.4 38.8 534.6 40.4H530" fill="none" stroke="#4f82d6" stroke-width="0.9"/><circle cx="531.6" cy="38" r="1.6" fill="#2f5fc4"/>
<path d="M541.6 34.2H548L551.2 36.6L548 39H541.6Z" fill="#e7c66b" stroke="#8d7434" stroke-width="0.6"/><path d="M543.4 36.6H547" stroke="#6e5a2a" stroke-width="0.8"/>
<path d="M556.8 33.2L563.4 40 M563.4 33.2L556.8 40" stroke="#e2584c" stroke-width="0.9"/>
<path d="M570.4 33.2L577 40 M577 33.2L570.4 40" stroke="#e2584c" stroke-width="0.9" stroke-dasharray="1.5 0.7"/>
<line x1="582.2" y1="31" x2="582.2" y2="42" stroke="#c6c6c6" stroke-width="0.8" />
<rect x="585.4" y="31.4" width="73.4" height="10.6" fill="#fff" stroke="#d9d9d9" stroke-width="0.6" />
<text x="588.4" y="39" font-size="7.3" fill="#151515" textLength="46.5" lengthAdjust="spacingAndGlyphs" stroke="#151515" stroke-width="0.15">[No Variations]</text>
<path d="M654.1999999999999 36.0H657.4L655.8 37.699999999999996Z" fill="#333"/>
<rect x="661.6" y="32.8" width="9.4" height="7.4" rx="1" fill="#5aa860" stroke="#39743f" stroke-width="0.5"/><rect x="663" y="35.6" width="6.6" height="3.2" fill="#d8645c"/><path d="M663 34.4H669" stroke="#cfe8c6" stroke-width="0.7"/>
<line x1="676.2" y1="31" x2="676.2" y2="42" stroke="#c6c6c6" stroke-width="0.8" />
<rect x="679.6" y="31.6" width="38" height="10.2" fill="#f4f4f4" stroke="#c9c9c9" stroke-width="0.7" />
<path d="M712.2 36.2H715.0L713.6 37.8Z" fill="#9a9a9a"/>
<text x="720.8000000000001" y="40.4" font-size="7" fill="#555" textLength="6.2" lengthAdjust="spacingAndGlyphs" stroke="#555" stroke-width="0.15">...</text>
<rect x="729.6" y="31.6" width="38" height="10.2" fill="#f4f4f4" stroke="#c9c9c9" stroke-width="0.7" />
<path d="M762.2 36.2H765.0L763.6 37.8Z" fill="#9a9a9a"/>
<text x="770.8000000000001" y="40.4" font-size="7" fill="#555" textLength="6.2" lengthAdjust="spacingAndGlyphs" stroke="#555" stroke-width="0.15">...</text>
<rect x="2.4" y="46" width="70.6" height="12.2" fill="#f6f6f6" stroke="#cdcdcd" stroke-width="0.7" rx="1.6" />
<text x="16.6" y="54.4" font-size="6.9" fill="#141414" textLength="54.4" lengthAdjust="spacingAndGlyphs" stroke="#141414" stroke-width="0.15">projet_final.SchDoc</text>
<rect x="5.6" y="49.4" width="7" height="5.2" fill="#f0cd4c" stroke="#8a6d1f" stroke-width="0.5"/><rect x="6.199999999999999" y="50" width="5.8" height="1.4" fill="#fbeeb0"/>
<rect x="76.8" y="46" width="54" height="12.2" fill="#f6f6f6" stroke="#cdcdcd" stroke-width="0.7" rx="1.6" />
<text x="90.4" y="54.4" font-size="6.9" fill="#141414" textLength="38.4" lengthAdjust="spacingAndGlyphs" stroke="#141414" stroke-width="0.15">PCB2.PcbDoc</text>
<path d="M79.4 50L87.4 49V54L79.4 55.4Z" fill="#3d9350" stroke="#245b31" stroke-width="0.5"/>
<rect x="133.8" y="46" width="78.4" height="12.2" fill="#f6f6f6" stroke="#cdcdcd" stroke-width="0.7" rx="1.6" />
<text x="147.6" y="54.4" font-size="6.9" fill="#141414" textLength="62.4" lengthAdjust="spacingAndGlyphs" stroke="#141414" stroke-width="0.15">PCB_monotron.OutJob</text>
<path d="M136.6 55.6V49.2H139.4L140.4 50.4H144.4V55.6Z" fill="#f3dc7e" stroke="#b99632" stroke-width="0.5"/><rect x="138.6" y="51.4" width="3.6" height="3.2" fill="#fff" stroke="#4a78c8" stroke-width="0.5"/>
<rect x="215.4" y="46" width="38.8" height="12.2" fill="#f6f6f6" stroke="#cdcdcd" stroke-width="0.7" rx="1.6" />
<text x="229.4" y="54.4" font-size="6.9" fill="#141414" textLength="22.6" lengthAdjust="spacingAndGlyphs" stroke="#141414" stroke-width="0.15">Devices</text>
<path d="M218.2 51.8L222.2 49.6L226.4 51.4L222.4 53.8Z" fill="#2d3f58"/><path d="M218.2 51.8V53.4L222.4 55.8V53.8Z" fill="#18222f"/><path d="M226.4 51.4V53L222.4 55.8V53.8Z" fill="#5b748f"/>
<rect x="257" y="46" width="52.2" height="12.2" fill="#f6f6f6" stroke="#cdcdcd" stroke-width="0.7" rx="1.6" />
<text x="271.2" y="54.4" font-size="6.9" fill="#141414" textLength="36.2" lengthAdjust="spacingAndGlyphs" stroke="#141414" stroke-width="0.15">PCB Release</text>
<rect x="260.0" y="48.8" width="7.8" height="4" rx="0.6" fill="#566a80"/><rect x="260.0" y="52" width="7.8" height="4" rx="0.5" fill="#3f9b52"/><path d="M261.2 55H266.8" stroke="#e8d84c" stroke-width="0.7"/>
</g>
<g id="chrome-bottom" filter="url(#soft)">
<rect x="0" y="400.3" width="785" height="0.9" fill="#c6c6c6" />
<rect x="0" y="401.5" width="800" height="11" fill="#efefef" />
<rect x="0" y="411.6" width="800" height="1" fill="#bdbdbd" />
<rect x="0" y="412.6" width="800" height="0.9" fill="#fdfdfd" />
<line x1="686.4" y1="401.2" x2="686.4" y2="411.6" stroke="#cfcfcf" stroke-width="0.8" />
<rect x="0" y="413.4" width="800" height="13.2" fill="#f0f0f0" />
<path d="M3.6 401.5L6.6 411.6H31.6L34.6 401.5" fill="#fcfcfc" stroke="#8e8e8e" stroke-width="0.7"/>
<text x="8.6" y="409.2" font-size="6.9" fill="#111" textLength="19.4" lengthAdjust="spacingAndGlyphs" font-weight="bold" stroke="#111" stroke-width="0.15">Editor</text>
<path d="M693.4 408.4L698 402.6L700.6 404.4L696 410Z" fill="#dfe6f6" stroke="#5c6fc8" stroke-width="0.6"/><path d="M693.4 408.4L696 410L694.4 410.4Z" fill="#e8c95a"/><path d="M691.6 411H700.6" stroke="#2a3cf0" stroke-width="1.3" stroke-dasharray="3 1.6"/>
<line x1="703.8" y1="402.4" x2="703.8" y2="411.6" stroke="#cfcfcf" stroke-width="0.7" />
<rect x="705.6" y="402.2" width="19.6" height="9.8" fill="#f4f4f4" stroke="#d2d2d2" stroke-width="0.6" />
<circle cx="709.6" cy="405.2" r="1.6" fill="#f0d94a" stroke="#8d7a22" stroke-width="0.4"/><circle cx="709.6" cy="409" r="1.4" fill="#f0d94a" stroke="#8d7a22" stroke-width="0.4"/><path d="M712.6 404.6L715.4 407L712.6 409.6Z" fill="#444"/><path d="M717 404.4H723.4L721 407V409.8L719.4 409V407Z" fill="#dfe7ef" stroke="#445" stroke-width="0.6"/>
<rect x="726.2" y="402.2" width="36.4" height="9.8" fill="#f4f4f4" stroke="#d2d2d2" stroke-width="0.6" />
<text x="728.2" y="409.4" font-size="6.8" fill="#555" textLength="32.4" lengthAdjust="spacingAndGlyphs" stroke="#555" stroke-width="0.15">Mask Level</text>
<rect x="763.6" y="402.2" width="18.4" height="9.8" fill="#f4f4f4" stroke="#d2d2d2" stroke-width="0.6" />
<text x="765.8" y="409.4" font-size="6.8" fill="#555" textLength="14.2" lengthAdjust="spacingAndGlyphs" stroke="#555" stroke-width="0.15">Clear</text>
<text x="2.6" y="421.6" font-size="6.8" fill="#2a2a2a" textLength="43" lengthAdjust="spacingAndGlyphs" stroke="#2a2a2a" stroke-width="0.15">X:3450 Y:1780</text>
<text x="51.6" y="421.6" font-size="6.8" fill="#2a2a2a" textLength="20.4" lengthAdjust="spacingAndGlyphs" stroke="#2a2a2a" stroke-width="0.15">Grid:10</text>
<line x1="203.6" y1="414.4" x2="203.6" y2="425.4" stroke="#c9c9c9" stroke-width="0.7" />
<line x1="407.2" y1="414.4" x2="407.2" y2="425.4" stroke="#c9c9c9" stroke-width="0.7" />
<rect x="612.4" y="414.7" width="29.6" height="10.5" fill="#f6f6f6" stroke="#d2d2d2" stroke-width="0.6" />
<text x="617.4" y="422.2" font-size="6.8" fill="#333" textLength="19.4" lengthAdjust="spacingAndGlyphs" stroke="#333" stroke-width="0.15">System</text>
<rect x="642" y="414.7" width="51.8" height="10.5" fill="#f6f6f6" stroke="#d2d2d2" stroke-width="0.6" />
<text x="645.6" y="422.2" font-size="6.8" fill="#333" textLength="45.2" lengthAdjust="spacingAndGlyphs" stroke="#333" stroke-width="0.15">Design Compiler</text>
<rect x="693.8" y="414.7" width="25.5" height="10.5" fill="#f6f6f6" stroke="#d2d2d2" stroke-width="0.6" />
<text x="700.2" y="422.2" font-size="6.8" fill="#333" textLength="12.2" lengthAdjust="spacingAndGlyphs" stroke="#333" stroke-width="0.15">SCH</text>
<rect x="719.3" y="414.7" width="25.2" height="10.5" fill="#f6f6f6" stroke="#d2d2d2" stroke-width="0.6" />
<text x="725" y="422.2" font-size="6.8" fill="#333" textLength="12.8" lengthAdjust="spacingAndGlyphs" stroke="#333" stroke-width="0.15">Help</text>
<rect x="744.5" y="414.7" width="40" height="10.5" fill="#f6f6f6" stroke="#d2d2d2" stroke-width="0.6" />
<text x="748.2" y="422.2" font-size="6.8" fill="#333" textLength="32" lengthAdjust="spacingAndGlyphs" stroke="#333" stroke-width="0.15">Instruments</text>
<rect x="787.2" y="414.7" width="9.6" height="10.5" fill="#f6f6f6" stroke="#d2d2d2" stroke-width="0.6" />
<text x="789.2" y="422.2" font-size="6.8" fill="#333" textLength="6.3" lengthAdjust="spacingAndGlyphs" stroke="#333" stroke-width="0.15">&gt;&gt;</text>
<line x1="617.4" y1="423.3" x2="620.6" y2="423.3" stroke="#444" stroke-width="0.5" />
<line x1="645.6" y1="423.3" x2="649.6" y2="423.3" stroke="#444" stroke-width="0.5" />
<line x1="704" y1="423.3" x2="708" y2="423.3" stroke="#444" stroke-width="0.5" />
<line x1="725" y1="423.3" x2="729" y2="423.3" stroke="#444" stroke-width="0.5" />
<line x1="748.2" y1="423.3" x2="749.4" y2="423.3" stroke="#444" stroke-width="0.5" />
</g>
<g id="taskbar" filter="url(#soft)">
<rect x="0" y="426.6" width="800" height="23.4" fill="#1e1e1e" />
<path d="M103 427H134C130 431 124 432 120 435C114 433 108 431 103 427Z" fill="#0c0c0c"/>
<path d="M286 450L300 427H310L296 450Z" fill="#141414"/>
<path d="M400 450C420 440 450 432 478 427H440C420 432 405 440 396 450Z" fill="#141212"/>
<rect x="552.6" y="426.6" width="98.6" height="23.4" fill="#121212" />
<path d="M590 427C574 432 564 440 558 450H652V427Z" fill="#171717"/>
<path d="M556 450C562 440 572 432 590 427" stroke="#262626" stroke-width="4" fill="none"/><path d="M580 450C586 441 596 433 612 427" stroke="#1f1f1f" stroke-width="2.4" fill="none"/>
<rect x="601.6" y="429.6" width="8.4" height="8" rx="2" fill="#232323" stroke="#2d2d2d" stroke-width="0.7"/><circle cx="605.8" cy="433.6" r="2.2" fill="#1a1a1a" stroke="#333" stroke-width="0.6"/>
<path d="M622 442L640 436.6 M628 447L648 440 M636 434L648 431" stroke="#3c1414" stroke-width="1.3"/>
<path d="M651.2 452V431.6Q651.2 427.4 655.4 427.4H806V452Z" fill="#1e1b1b" stroke="#3a3636" stroke-width="0.6"/>
<path d="M742 450C748 440 756 432 764 427H772C764 433 756 441 752 450Z" fill="#262424"/>
<rect x="155.2" y="427.2" width="34.2" height="21.2" fill="#424242" stroke="#5e5e5e" stroke-width="0.7" />
<rect x="191.2" y="427.2" width="34.6" height="21.2" fill="#424242" stroke="#5e5e5e" stroke-width="0.7" />
<rect x="481.8" y="427.2" width="33.8" height="21.2" fill="#373434" stroke="#5a5757" stroke-width="0.7" />
<rect x="518.4" y="427.2" width="33.8" height="21.2" fill="#5f5c5c" stroke="#9a9898" stroke-width="0.7" />
<circle cx="27.2" cy="437.8" r="9.2" fill="url(#ecl)"/><path d="M19.4 437.2H35 M19.2 439.2H35.2 M19.8 441.2H34.6" stroke="#e6e0f6" stroke-width="0.8" opacity="0.85"/><ellipse cx="26.4" cy="432.6" rx="4.6" ry="2.2" fill="#efeafa" opacity="0.55"/>
<path d="M55 431L71 431.6V443L55 443.6Z" fill="#3f9a4a"/><path d="M56.4 432.4L69.8 432.8V441.8L56.4 442.2Z" fill="#f4faf4"/>
<text x="57.8" y="441.2" font-size="9.6" fill="#2a9238" textLength="11.4" lengthAdjust="spacingAndGlyphs" font-weight="bold" stroke="#2a9238" stroke-width="0.15">C#</text>
<path d="M59.6 443.6C63 445 66 445.2 70 444.8" stroke="#4a86e0" stroke-width="1.5" fill="none"/><path d="M69.4 442.6L72.6 444.8L69.4 446.8Z" fill="#4a86e0"/>
<path d="M99.6 429.6L104 443H95.2Z" fill="#f08a1c"/><path d="M97.9 434.6H101.3L102.2 437.4H97Z" fill="#f6f0e8"/><path d="M96.2 440H103L103.6 441.8H95.6Z" fill="#f6f0e8"/><rect x="92.6" y="443" width="14" height="3.2" rx="0.8" fill="#e67a12"/>
<circle cx="136" cy="438.4" r="8.4" fill="#2b7fc9"/><path d="M129.6 437.2C132 435.6 134 436.2 135.6 437.6C137 436 139.6 435 142.4 436.4C139.8 436.6 138 437.8 136.6 439.4C134.8 437.8 132.4 437 129.6 437.2Z" fill="#fff"/><path d="M131 441.6C133.4 440.4 135.6 440.8 137 442C138.6 440.8 140.4 440.6 142 441.2" stroke="#fff" stroke-width="0.9" fill="none"/>
<path d="M164 446V432.6H169L170.2 434H181V446Z" fill="#e9c865"/><rect x="165.4" y="435.6" width="14.4" height="10.6" fill="#f6e5a0"/><rect x="166.6" y="438.6" width="12" height="7.6" fill="#6db1e6"/><rect x="168.6" y="441" width="8" height="3" fill="#e8f2fb"/>
<circle cx="208.6" cy="438.4" r="8.2" fill="#e8681f"/><circle cx="209" cy="437.2" r="5" fill="#3a6fd0"/><path d="M200.6 439.4C202 446.4 214 448.0 216.6 439.4C214 443.4 205 443.0 203.6 436.4Z" fill="#f3a11f"/>
<path d="M245 430.4L251.2 436L245 441L238.8 436Z" fill="none" stroke="#35b2d6" stroke-width="1.7"/><path d="M245 434.2L246.8 436L245 437.6L243.2 436Z" fill="#35b2d6"/><path d="M238.6 440.6L245 446L251.4 440.6" stroke="#35b2d6" stroke-width="1.8" fill="none"/>
<rect x="271.6" y="429.4" width="17.6" height="18" rx="1.6" fill="#c8161d"/><path d="M276 439.6C276.6 433.6 282.6 431.6 284.8 435.4C283.4 434.8 281.6 435.2 280.8 437 M280.6 433.6L284.4 440.4" stroke="#fff" stroke-width="1.3" fill="none"/>
<text x="273.6" y="446.2" font-size="4.4" fill="#fff" textLength="13.6" lengthAdjust="spacingAndGlyphs" font-weight="bold" stroke="#fff" stroke-width="0.15">AVIRA</text>
<circle cx="317.4" cy="438.4" r="8.4" fill="#2e86d0"/><path d="M317.4 432.4V438.6 M314.2 436.4L317.4 440L320.6 436.4" stroke="#fff" stroke-width="1.8" fill="none"/><path d="M311.6 441.4H323.2V444H311.6Z" fill="#fff"/>
<circle cx="353.4" cy="438.4" r="8.4" fill="#1f8cc8"/><path d="M347 445L355.4 431.4L359.6 445H356.2L354.6 438.4L350.6 445Z" fill="#e8f2f8"/><path d="M346 440C350 434 356 431.6 361.4 432.4" stroke="#bfe2f4" stroke-width="1" fill="none"/>
<rect x="378.8" y="428.2" width="23.2" height="16.2" rx="0.8" fill="#ececec"/><rect x="380.2" y="429.6" width="20.4" height="13.4" fill="#2363b6"/><rect x="387.4" y="444.4" width="6" height="2.2" fill="#cfcfcf"/><rect x="384" y="446.4" width="13" height="1.7" fill="#e4e4e4"/>
<text x="381.6" y="434.4" font-size="3.6" fill="#fff" textLength="10.5" lengthAdjust="spacingAndGlyphs" stroke="#fff" stroke-width="0.15">lenovo</text>
<circle cx="426.2" cy="438" r="9.4" fill="#3fae3a"/><path d="M420.4 434.4L426.2 441.6L432 434.4" stroke="#fff" stroke-width="2.8" fill="none"/>
<path d="M454.59999999999997 434.6L462.59999999999997 439.6V447.2L454.59999999999997 442.4Z" fill="#ededed"/><path d="M462.59999999999997 439.6L472.0 434.8V442.2L462.59999999999997 447.2Z" fill="#c4c4c4"/><path d="M454.59999999999997 437.4L462.59999999999997 442.4L472.0 437.6 M454.59999999999997 440L462.59999999999997 445L472.0 440.2" stroke="#8e8e8e" stroke-width="0.6" fill="none"/><path d="M454.59999999999997 434.6L463.8 429.8L472.0 434.8L462.59999999999997 439.6Z" fill="#141414"/><path d="M460.8 434.6L463.8 433L466.59999999999997 434.6L463.4 436.4Z" fill="#e0a820"/><path d="M458.59999999999997 432.8L462.2 430.8L463.59999999999997 431.6L459.8 433.6Z" fill="#86a9c9"/><path d="M465.59999999999997 431.4L469.2 433.4L468.2 434L464.59999999999997 432Z" fill="#7d7d7d"/>
<path d="M526.8 434.6L534.8 439.6V447.2L526.8 442.4Z" fill="#ededed"/><path d="M534.8 439.6L544.1999999999999 434.8V442.2L534.8 447.2Z" fill="#c4c4c4"/><path d="M526.8 437.4L534.8 442.4L544.1999999999999 437.6 M526.8 440L534.8 445L544.1999999999999 440.2" stroke="#8e8e8e" stroke-width="0.6" fill="none"/><path d="M526.8 434.6L536.0 429.8L544.1999999999999 434.8L534.8 439.6Z" fill="#141414"/><path d="M533.0 434.6L536.0 433L538.8 434.6L535.6 436.4Z" fill="#e0a820"/><path d="M530.8 432.8L534.4 430.8L535.8 431.6L532.0 433.6Z" fill="#86a9c9"/><path d="M537.8 431.4L541.4 433.4L540.4 434L536.8 432Z" fill="#7d7d7d"/>
<circle cx="499.4" cy="438.4" r="7.6" fill="#1ea7e6"/><circle cx="495.2" cy="434" r="3.8" fill="#1ea7e6"/><circle cx="503.6" cy="442.8" r="3.8" fill="#1ea7e6"/>
<text x="495.6" y="443" font-size="12.4" fill="#fff" font-weight="bold" stroke="#fff" stroke-width="0.15">S</text>
<circle cx="670.2" cy="438" r="9.2" fill="#d63a32"/><path d="M665 434L668 437 M674 434L671 437 M665 442.6L668 439.6 M674 442.6L671 439.6 M664.4 438.2H667 M672.4 438.2H675" stroke="#fff" stroke-width="1.3"/><circle cx="675.6" cy="431.8" r="2.7" fill="#f2a184"/><path d="M674.4 430.6L676.8 433 M676.8 430.6L674.4 433" stroke="#fff" stroke-width="0.7"/>
<path d="M690.6 441L693 438.2L695.4 441Z" fill="#e8e8e8"/>
<rect x="703.6" y="436.6" width="2.4" height="5.6" fill="#ddd"/><rect x="707" y="434.8" width="3.6" height="8" fill="none" stroke="#e8e8e8" stroke-width="0.8"/><rect x="707.8" y="437.8" width="2" height="4.4" fill="#e8e8e8"/>
<path d="M717.6 437.2H719.4L722 434.8V443L719.4 440.6H717.6Z" fill="#e8e8e8"/><circle cx="724.4" cy="441.6" r="2.1" fill="#d8342c"/>
<rect x="732" y="434.8" width="6.4" height="4.8" fill="none" stroke="#e8e8e8" stroke-width="0.8"/><path d="M733 443.4H737 M735 439.8V443.4 M738.8 438.6L741 443.6" stroke="#e8e8e8" stroke-width="0.8"/>
<text x="759.5" y="436.1" font-size="7.2" fill="#f2f2f2" textLength="16.2" lengthAdjust="spacingAndGlyphs" stroke="#f2f2f2" stroke-width="0.15">09:40</text>
<text x="751" y="446.2" font-size="7.2" fill="#f2f2f2" textLength="33" lengthAdjust="spacingAndGlyphs" stroke="#f2f2f2" stroke-width="0.15">13/04/2014</text>
</g>
</svg></body></html>
